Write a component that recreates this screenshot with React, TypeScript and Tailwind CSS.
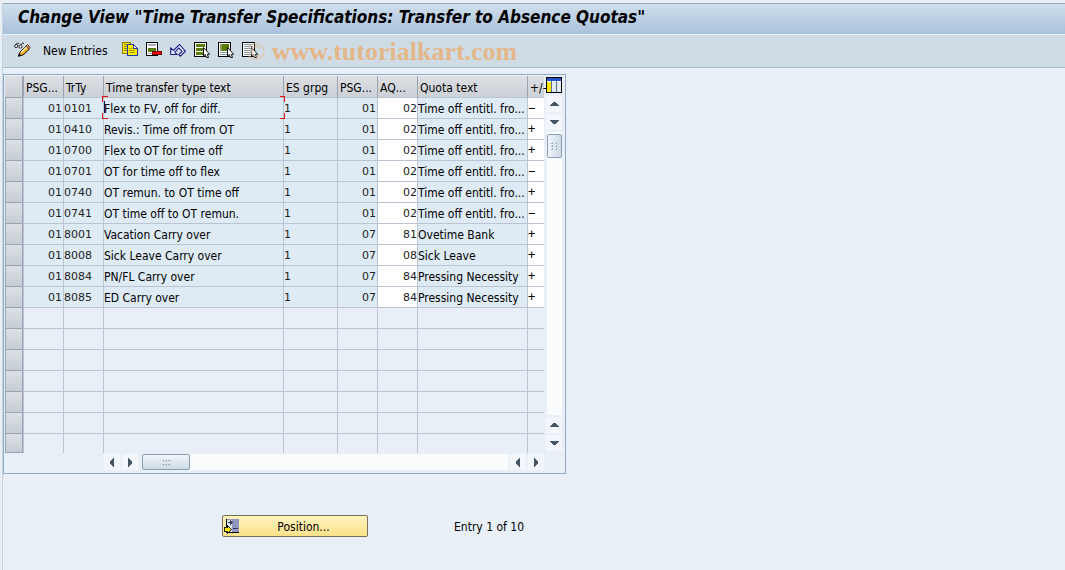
import type { ReactNode } from 'react';

type Row = { psg: string; type: string; text: string; es: string; psg2: string; aq: string; quota: string; sign: string };

const make = (type: string, text: string, psg2: string, aq: string, quota: string, sign: string): Row => ({
  psg: '01', type, text, es: '1', psg2, aq, quota, sign,
});

const rows: Row[] = [
  make('0101', 'Flex to FV, off for diff.', '01', '02', 'Time off entitl. fro...', '−'),
  make('0410', 'Revis.: Time off from OT', '01', '02', 'Time off entitl. fro...', '+'),
  make('0700', 'Flex to OT for time off', '01', '02', 'Time off entitl. fro...', '+'),
  make('0701', 'OT for time off to flex', '01', '02', 'Time off entitl. fro...', '−'),
  make('0740', 'OT remun. to OT time off', '01', '02', 'Time off entitl. fro...', '+'),
  make('0741', 'OT time off to OT remun.', '01', '02', 'Time off entitl. fro...', '−'),
  make('8001', 'Vacation Carry over', '07', '81', 'Ovetime Bank', '+'),
  make('8008', 'Sick Leave Carry over', '07', '08', 'Sick Leave', '+'),
  make('8084', 'PN/FL Carry over', '07', '84', 'Pressing Necessity', '+'),
  make('8085', 'ED Carry over', '07', '84', 'Pressing Necessity', '+'),
];

const emptyRows = [11, 12, 13, 14, 15, 16, 17];
const headers = ['PSG...', 'TrTy', 'Time transfer type text', 'ES grpg', 'PSG...', 'AQ...', 'Quota text', '+/-'];

const cell = 'h-[21px] overflow-hidden whitespace-nowrap border-b border-l border-[#bcc4d4] p-0';
const digits = "font-['DejaVu_Sans',sans-serif] text-[11px] text-[#222]";

function Svg({ children }: { children: ReactNode }) {
  return (
    <svg width="16" height="16" viewBox="0 0 16 16" shapeRendering="crispEdges" aria-hidden="true">
      {children}
    </svg>
  );
}

function Pointer() {
  return (
    <g shapeRendering="geometricPrecision">
      <path d="M9.500 5.500v8.500l1.800-1.500 1.200 3h2l-1.200-3.200h2.400z" fill="#fff" stroke="#000" strokeWidth=".9" />
    </g>
  );
}

function GlassesPencil() {
  return (
    <svg width="17" height="16" viewBox="0 0 17 16" aria-hidden="true">
      <path d="M1 3.500 3.500 1l1.500.5M6 3.500 8.500 1l1.500.5" fill="none" stroke="#222" />
      <circle cx="2.200" cy="4" r="1.600" fill="#e9eff4" stroke="#222" />
      <circle cx="6.500" cy="4.500" r="1.600" fill="#e9eff4" stroke="#222" />
      <path d="m4.500 14 1.500-4 6.500-6L15.500 7 9 13z" fill="#f8a820" stroke="#111" />
      <path d="m7 10.500 6-5.500" stroke="#fff4b0" strokeWidth="1.500" />
      <path d="m12 4 1.500-1.500L16.300 5.200l-1.500 1.500z" fill="#ed8a50" stroke="#333" strokeWidth=".8" />
      <path d="m4 14.800 1-3.500 2.500 2.500z" fill="#111" />
    </svg>
  );
}

function Copy() {
  return (
    <Svg>
      <path d="M.5.5h8v11h-8z" fill="#ffe800" stroke="#8a7b10" />
      <path d="M2 2.500h4M2 4.500h3M2 6.500h3M2 8.500h3" stroke="#888430" />
      <path d="M5.500 2.500h6l4 4v7h-10z" fill="#fff000" stroke="#2636a0" />
      <path d="M11.500 2.500v4h4z" fill="#fff" stroke="#2636a0" />
      <path d="M7 6.500h3M7 8.500h6M7 10.500h6" stroke="#aaa000" />
    </Svg>
  );
}

function DeleteRow() {
  return (
    <Svg>
      <path d="M.5.5h11v13H.5z" fill="#fff" stroke="#000" />
      <path d="M2 2h8v2H2zM2 11h5v1H2z" fill="#a9a9ce" />
      <path d="M2 6h8v4H2z" fill="#567d05" />
      <path d="M6.500 9.500h9v3h-9z" fill="#f00" stroke="#600" />
    </Svg>
  );
}

function Undo() {
  return (
    <svg width="16" height="16" viewBox="0 0 16 16" aria-hidden="true">
      <path d="M.7 6v6.500H7L4.800 10.300 8.800 6l3.400 3.200-3.400 3.500 1.600 1.500 5-5L9.500 2.500l-6 6z" fill="#e9effc" stroke="#1c1c88" strokeWidth="1.100" />
    </svg>
  );
}

function SelectAll() {
  return (
    <Svg>
      <path d="M.5.5h12v14H.5z" fill="#fff" stroke="#000" />
      <path d="M2 2h9v3H2zM2 6h9v3H2zM2 10h9v3H2z" fill="#587f05" />
      <Pointer />
    </Svg>
  );
}

function SelectBlock() {
  return (
    <Svg>
      <path d="M.5.5h12v14H.5z" fill="#fff" stroke="#000" />
      <path d="M2 2h9v7H2z" fill="#587f05" />
      <path d="M2 2h2v7H2z" fill="#8a9e55" />
      <path d="M2 10.500h8M2 12.500h8" stroke="#8095ad" />
      <Pointer />
    </Svg>
  );
}

function DeselectAll() {
  return (
    <Svg>
      <path d="M.5.5h12v14H.5z" fill="#fff" stroke="#000" />
      <path d="M2 2.500h9M2 4.500h9M2 6.500h9M2 8.500h9M2 10.500h8M2 12.500h8" stroke="#8095ad" />
      <Pointer />
    </Svg>
  );
}

const arrows = {
  up: 'M4 9h9v1H4zM5 8h7v1H5zM6 7h5v1H6zM7 6h3v1H7z',
  down: 'M4 6h9v1H4zM5 7h7v1H5zM6 8h5v1H6zM7 9h3v1H7z',
  left: 'M9 4v9h1V4zM8 5v7h1V5zM7 6v5h1V6zM6 7v3h1V7z',
  right: 'M6 4v9h1V4zM7 5v7h1V5zM8 6v5h1V6zM9 7v3h1V7z',
};

function Arrow({ dir, label }: { dir: keyof typeof arrows; label: string }) {
  return (
    <button type="button" aria-label={label} className="flex size-4 shrink-0 items-center justify-center bg-[#f3f6fa]">
      <Svg>
        <path d={arrows[dir]} fill="#455766" />
      </Svg>
    </button>
  );
}

function Grip({ vertical = false }: { vertical?: boolean }) {
  return (
    <span
      className={
        vertical
          ? 'flex h-6 w-[15px] shrink-0 items-center justify-center rounded-xs border border-[#8c9fb3] bg-linear-to-r from-[#f1f6fb] to-[#ccdae6]'
          : 'flex h-4 w-12 items-center justify-center rounded-xs border border-[#8c9fb3] bg-linear-to-b from-[#f1f6fb] to-[#ccdae6]'
      }
    >
      <svg width="9" height="9" viewBox="0 0 9 9" shapeRendering="crispEdges" aria-hidden="true">
        <path
          d={vertical ? 'M1 0h2v2H1zM5 0h2v2H5zM1 3h2v2H1zM5 3h2v2H5zM1 6h2v2H1zM5 6h2v2H5z' : 'M0 2h2v2H0zM3 2h2v2H3zM6 2h2v2H6zM0 6h2v2H0zM3 6h2v2H3zM6 6h2v2H6z'}
          fill="#a4b0bf"
        />
        <path
          d={vertical ? 'M1 0h1v1H1zM5 0h1v1H5zM1 3h1v1H1zM5 3h1v1H5zM1 6h1v1H1zM5 6h1v1H5z' : 'M0 3h1v1H0zM3 3h1v1H3zM6 3h1v1H6zM0 7h1v1H0zM3 7h1v1H3zM6 7h1v1H6z'}
          fill="#fff"
        />
      </svg>
    </span>
  );
}

function Selector({ n, last = false }: { n: number; last?: boolean }) {
  return (
    <td className="p-0">
      <button
        type="button"
        aria-label={`Select row ${n}`}
        className={`block w-full border border-t-0 border-[#98a4b4] bg-linear-to-b from-[#dde1e6] to-[#c6ccd4] ${last ? 'h-[19px]' : 'h-[21px]'}`}
      />
    </td>
  );
}

export default function App() {
  return (
    <div className="min-h-screen bg-[#e8eff6] pl-0.5 pt-[3px] font-['DejaVu_Sans_Condensed','Noto_Sans',sans-serif] text-xs text-black">
      <div className="min-h-[567px] border-l border-[#c5d2df]">
        <header className="flex h-8 items-center border-b border-t border-b-[#e9f1f8] border-t-[#94a7ba] bg-linear-to-b from-[#cfdfec] to-[#aac1dc] px-[15px]">
          <h1 className="whitespace-nowrap pb-1 text-[17px] font-bold italic leading-6">
            Change View "Time Transfer Specifications: Transfer to Absence Quotas"
          </h1>
        </header>

        <div className="relative flex h-[33px] items-center border-b border-[#a4b7c6] bg-[#cfdce6] pl-[11px]">
          <button type="button" aria-label="Display or change" className="pb-0.5"><GlassesPencil /></button>
          <button type="button" className="ml-3 w-[67px] whitespace-nowrap text-left">New Entries</button>
          <div className="ml-3 flex gap-2 pb-0.5">
            <button type="button" aria-label="Copy as"><Copy /></button>
            <button type="button" aria-label="Delete"><DeleteRow /></button>
            <button type="button" aria-label="Undo change"><Undo /></button>
            <button type="button" aria-label="Select all"><SelectAll /></button>
            <button type="button" aria-label="Select block"><SelectBlock /></button>
            <button type="button" aria-label="Deselect all"><DeselectAll /></button>
          </div>
          <div className="pointer-events-none absolute left-[243px] top-px flex h-8 items-center gap-[6px] whitespace-nowrap font-['Liberation_Serif',serif] text-[26px] text-[#e4b78b]">
            <span className="opacity-70">©</span>
            <span className="font-bold">www.tutorialkart.com</span>
          </div>
        </div>

        <main className="pt-[6px]">
          <section className="w-fit border border-[#91abc4] p-px pb-[3px] pr-[3px]">
            <div className="flex gap-[2px]">
              <table className="w-[539px] table-fixed border-separate border-spacing-0">
                <colgroup>
                  <col className="w-[18px]" />
                  <col className="w-[40px]" />
                  <col className="w-[40px]" />
                  <col className="w-[180px]" />
                  <col className="w-[54px]" />
                  <col className="w-[40px]" />
                  <col className="w-[40px]" />
                  <col className="w-[110px]" />
                  <col className="w-[17px]" />
                </colgroup>
                <thead>
                  <tr>
                    <th className="h-[22px] border-b border-r border-[#98a4b4] bg-linear-to-b from-[#dde1e6] to-[#c9ced5] p-0" aria-label="Row selection" />
                    {headers.map((h, i) => (
                      <th
                        key={i}
                        scope="col"
                        className="h-[22px] whitespace-nowrap border-b border-l border-b-[#bcc4d0] border-l-[#9aa3ae] bg-linear-to-b from-[#dcdfe3] to-[#ccd1d7] p-0 pl-[2px] pt-0.5 text-left font-normal"
                      >
                        {h}
                      </th>
                    ))}
                  </tr>
                </thead>
                <tbody>
                  {rows.map((r, i) => (
                    <tr key={r.type} className="bg-[#deebf5]">
                      <Selector n={i + 1} />
                      <td className={`${cell} ${digits} pr-px pt-0.5 text-right`}>{r.psg}</td>
                      <td className={`${cell} ${digits} pt-0.5`}>{r.type}</td>
                      <td className="relative h-[21px] whitespace-nowrap border-b border-l border-[#bcc4d4] p-0 pt-0.5">
                        {r.text}
                        {i === 0 && (
                          <svg className="absolute -left-0.5 -top-0.5" width="184" height="24" viewBox="0 0 184 24" shapeRendering="crispEdges" aria-hidden="true">
                            <path d="M6 .5H.5V6M178 .5h4.500V6M6 22.500H.5V17M178 22.500h4.500V17" fill="none" stroke="#e01010" />
                            <path d="M2.500 5v12" stroke="#101050" />
                          </svg>
                        )}
                      </td>
                      <td className={`${cell} ${digits} pt-0.5`}>{r.es}</td>
                      <td className={`${cell} ${digits} pr-px pt-0.5 text-right`}>{r.psg2}</td>
                      <td className={`${cell} bg-white`}>
                        <input aria-label={`AQ, row ${i + 1}`} defaultValue={r.aq} className={`${digits} block h-5 w-full bg-white p-0 text-right outline-none`} />
                      </td>
                      <td className={`${cell} pt-0.5`}>{r.quota}</td>
                      <td className={`${cell} bg-white`}>
                        <input
                          aria-label={`Sign, row ${i + 1}`}
                          defaultValue={r.sign}
                          className="block h-5 w-full bg-white p-0 font-['DejaVu_Sans_Mono',monospace] text-xs outline-none"
                        />
                      </td>
                    </tr>
                  ))}
                  {emptyRows.map((n) => (
                    <tr key={n}>
                      <Selector n={n} last={n === 17} />
                      {headers.map((_, i) => (
                        <td key={i} className={n === 17 ? 'border-l border-[#bcc4d4] p-0' : cell} />
                      ))}
                    </tr>
                  ))}
                </tbody>
              </table>

              <div className="flex w-4 flex-col items-center gap-[2px] pb-0.5">
                <button type="button" aria-label="Table settings" className="mb-px pt-px">
                  <Svg>
                    <path d="M.5.5h15v15H.5z" fill="#fff" stroke="#000" />
                    <path d="M1 1h14v3H1z" fill="#2455c8" />
                    <path d="M1 5h4v10H1z" fill="#ffe600" />
                    <path d="M6 5h4v10H6zM11 5h4v10h-4z" fill="#e3ebf2" />
                    <path d="M5.500 4v11M10.500 4v11" stroke="#536d91" />
                  </Svg>
                </button>
                <Arrow dir="up" label="Scroll up" />
                <Arrow dir="down" label="Scroll down" />
                <div className="w-[15px] flex-1 bg-[#fafbfd] pt-0.5"><Grip vertical /></div>
                <Arrow dir="up" label="Next row up" />
                <Arrow dir="down" label="Next row down" />
              </div>
            </div>

            <div className="flex items-center gap-[2px] pl-[99px] pr-[18px] pt-px">
              <Arrow dir="left" label="Scroll left" />
              <Arrow dir="right" label="Scroll right" />
              <div className="ml-0.5 h-4 flex-1 bg-[#fafbfd]"><Grip /></div>
              <Arrow dir="left" label="Previous column" />
              <Arrow dir="right" label="Next column" />
            </div>
          </section>

          <div className="mt-[41px] flex items-center pl-[219px]">
            <button type="button" className="flex h-[22px] w-[146px] items-center rounded-xs border border-[#77705c] bg-linear-to-b from-[#fff4bd] to-[#fbe18a] pl-px">
              <Svg>
                <path d="M2 1h13v14H2z" fill="#9297bd" />
                <path d="M2.500 1v13.500H15" fill="none" stroke="#000" />
                <path d="M3 2h5v12H3z" fill="#dde6ef" />
                <path d="M4 4.500h4M6 2.500l2 2-2 2M9 10.500h5" fill="none" stroke="#36395a" />
                <path d="M.5 9.500h3v-2l4 4-4 4v-2h-3z" fill="#ffe600" stroke="#222" />
              </Svg>
              <span className="flex-1 pt-0.5 text-center">Position...</span>
            </button>
            <span className="ml-[86px] pt-0.5">Entry 1 of 10</span>
          </div>
        </main>
      </div>
    </div>
  );
}
